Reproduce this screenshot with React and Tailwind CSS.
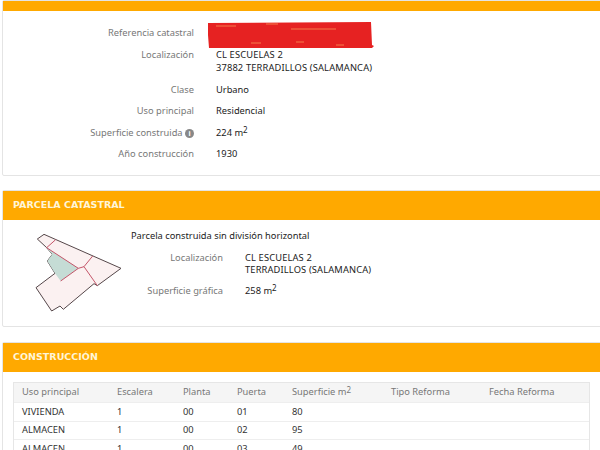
import React from 'react';

const font = { fontFamily: '"Noto Sans", sans-serif' };

function Row({ label, className = '', children }) {
  return (
    <div className={`flex ${className}`}>
      <div className="w-[191px] shrink-0 text-right text-[#777]">{label}</div>
      <div className="ml-[22px] text-[#222]">{children}</div>
    </div>
  );
}

function Sup() {
  return <span>m<sup className="top-[-0.3em] text-[8px] leading-none">2</sup></span>;
}

function Panel({ title, className = '', children }) {
  return (
    <section className={`ml-[2px] w-[640px] bg-white border border-[#e4e4e4] rounded-[2px] ${className}`}>
      {title && (
        <h2 style={{ fontFamily: '"DejaVu Sans", sans-serif' }} className="h-[29px] bg-[#ffa900] pl-[10px] text-[9.5px] leading-[27px] font-bold text-[#fff5d8]">
          {title}
        </h2>
      )}
      {children}
    </section>
  );
}

function ParcelMap() {
  return (
    <svg width="110" height="95" viewBox="0 0 330 285" className="shrink-0">
      <path d="M52 42 72 28 303 130 232 182 222 176 130 253 120 243 95 258 48 188 105 145 82 108 97 88 80 68Z" fill="#fbf1f1" stroke="#55474a" strokeWidth="3" />
      <path d="M80 68 175 130 122 168 105 145 82 108 97 88Z" fill="#c5dcd5" />
      <path d="M80 68 107 44M80 68 175 130 122 168M175 130 192 125 218 93M192 125 232 182" fill="none" stroke="#c4566a" strokeWidth="3" />
    </svg>
  );
}

const cols = 'grid grid-cols-[95px_66px_54px_55px_99px_98px_1fr] pl-[8px]';
const rows = [
  ['VIVIENDA', '1', '00', '01', '80'],
  ['ALMACEN', '1', '00', '02', '95'],
  ['ALMACEN', '1', '00', '03', '49'],
];

export default function App() {
  return (
    <div style={font} className="relative h-[450px] w-[600px] overflow-hidden bg-white text-[9.3px] leading-[12.5px]">
      <Panel className="h-[176px]">
        <div className="h-[10px] bg-[#ffa900]" />
        <div className="pt-[16px]">
          <Row label="Referencia catastral" className="h-[22px]"><span /></Row>
          <Row label="Localización" className="h-[35px]"><span className="tracking-[0.15px]">CL ESCUELAS 2<br />37882 TERRADILLOS (SALAMANCA)</span></Row>
          <Row label="Clase" className="h-[21px]">Urbano</Row>
          <Row label="Uso principal" className="h-[21.5px]">Residencial</Row>
          <Row label={<span>Superficie construida <span className="inline-block size-[9px] rounded-full bg-[#888] text-center text-[7px] leading-[9px] font-bold text-white">i</span></span>} className="h-[21.5px]">
            224 <Sup />
          </Row>
          <Row label="Año construcción">1930</Row>
        </div>
      </Panel>

      <Panel title="PARCELA CATASTRAL" className="mt-[14px] h-[137px]">
        <div className="flex pl-[17px] pt-[5px]">
          <ParcelMap />
          <div className="ml-[1px] pt-[5px] text-[#222]">
            <p>Parcela construida sin división horizontal</p>
            <div className="mt-[9px] flex h-[33px]">
              <div className="w-[92px] text-right text-[#777]">Localización</div>
              <div className="ml-[22px] tracking-[0.15px]">CL ESCUELAS 2<br />TERRADILLOS (SALAMANCA)</div>
            </div>
            <div className="flex">
              <div className="w-[92px] text-right text-[#777]">Superficie gráfica</div>
              <div className="ml-[22px]">258 <Sup /></div>
            </div>
          </div>
        </div>
      </Panel>

      <Panel title="CONSTRUCCIÓN" className="mt-[15px] h-[200px]">
        <div className="ml-[10px] mt-[10px] w-[577px] border border-[#e6e6e6]">
          <div className={`${cols} h-[19px] items-center bg-[#f5f5f5] text-[#777]`}>
            <div>Uso principal</div>
            <div>Escalera</div>
            <div>Planta</div>
            <div>Puerta</div>
            <div><span>Superficie m<sup className="top-[-0.3em] text-[8px] leading-none">2</sup></span></div>
            <div>Tipo Reforma</div>
            <div>Fecha Reforma</div>
          </div>
          {rows.map((row, i) => (
            <div key={i} className={`${cols} h-[18.5px] items-center border-t border-[#eee] text-[#333]`}>
              {row.map((cell, j) => <div key={j}>{cell}</div>)}
            </div>
          ))}
        </div>
      </Panel>

      <svg className="absolute left-[206px] top-[21px]" width="170" height="29" viewBox="0 0 170 29">
        <path d="M2 2 165 1 166 24 168 25 166 27 3 27 2 14Z" fill="#e62222" />
        <path d="M10 5h20M60 3h12M85 8h45M45 22h10M90 21h8M130 24h8" stroke="#f57a4a" strokeWidth="1" />
      </svg>
    </div>
  );
}
